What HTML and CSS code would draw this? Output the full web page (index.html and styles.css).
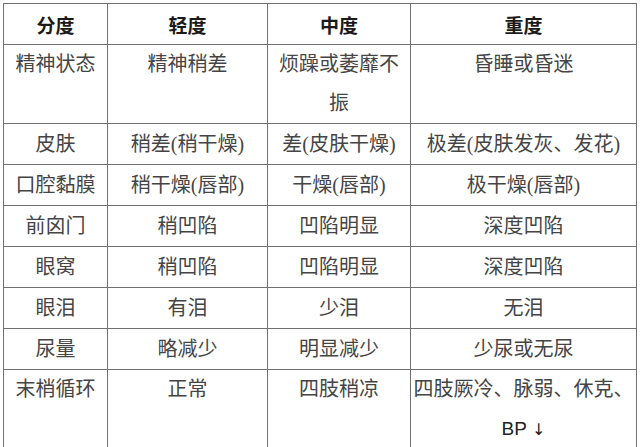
FILE: index.html
```html
<!DOCTYPE html>
<html lang="zh-CN">
<head>
<meta charset="utf-8">
<title>脱水分度</title>
<link rel="stylesheet" href="styles.css">
</head>
<body>
<table class="grade">
  <colgroup>
    <col class="c1"><col class="c2"><col class="c3"><col class="c4">
  </colgroup>
  <thead>
    <tr><th>分度</th><th>轻度</th><th>中度</th><th>重度</th></tr>
  </thead>
  <tbody>
    <tr class="tall"><td>精神状态</td><td>精神稍差</td><td>烦躁或萎靡不<br>振</td><td>昏睡或昏迷</td></tr>
    <tr><td>皮肤</td><td>稍差(稍干燥)</td><td>差(皮肤干燥)</td><td>极差(皮肤发灰、发花)</td></tr>
    <tr><td>口腔黏膜</td><td>稍干燥(唇部)</td><td>干燥(唇部)</td><td>极干燥(唇部)</td></tr>
    <tr><td>前囟门</td><td>稍凹陷</td><td>凹陷明显</td><td>深度凹陷</td></tr>
    <tr><td>眼窝</td><td>稍凹陷</td><td>凹陷明显</td><td>深度凹陷</td></tr>
    <tr><td>眼泪</td><td>有泪</td><td>少泪</td><td>无泪</td></tr>
    <tr><td>尿量</td><td>略减少</td><td>明显减少</td><td>少尿或无尿</td></tr>
    <tr class="tall"><td>末梢循环</td><td>正常</td><td>四肢稍凉</td><td>四肢厥冷、脉弱、休克、<br><span class="latin">BP</span> <span class="arrow">↓</span></td></tr>
  </tbody>
</table>
</body>
</html>
```

FILE: styles.css
```css
html, body {
  margin: 0;
  padding: 0;
  background: #ffffff;
  overflow: hidden;
}
body {
  padding: 3px 0 0 3px;
  height: 444px;
}
.grade {
  border-collapse: collapse;
  table-layout: fixed;
  width: 633px;
  font-family: "Liberation Serif", "Noto Sans CJK SC", serif;
  font-size: 20px;
  color: #454545;
}
.c1 { width: 104px; }
.c2 { width: 160px; }
.c3 { width: 143px; }
.c4 { width: 226px; }
.grade th,
.grade td {
  border: 1px solid #707070;
  padding: 1px 2px 0;
  line-height: 39px;
  text-align: center;
  vertical-align: top;
  white-space: nowrap;
}
.grade th {
  font-family: "Noto Sans CJK SC", sans-serif;
  font-weight: 700;
  color: #1a1a1a;
  font-size: 19px;
}
.grade tr.tall td {
  padding-top: 0;
}
.latin {
  font-family: "Liberation Sans", sans-serif;
  font-size: 19px;
  color: #222;
}
.arrow {
  font-family: "DejaVu Sans", sans-serif;
  font-size: 16px;
  color: #222;
}
```
